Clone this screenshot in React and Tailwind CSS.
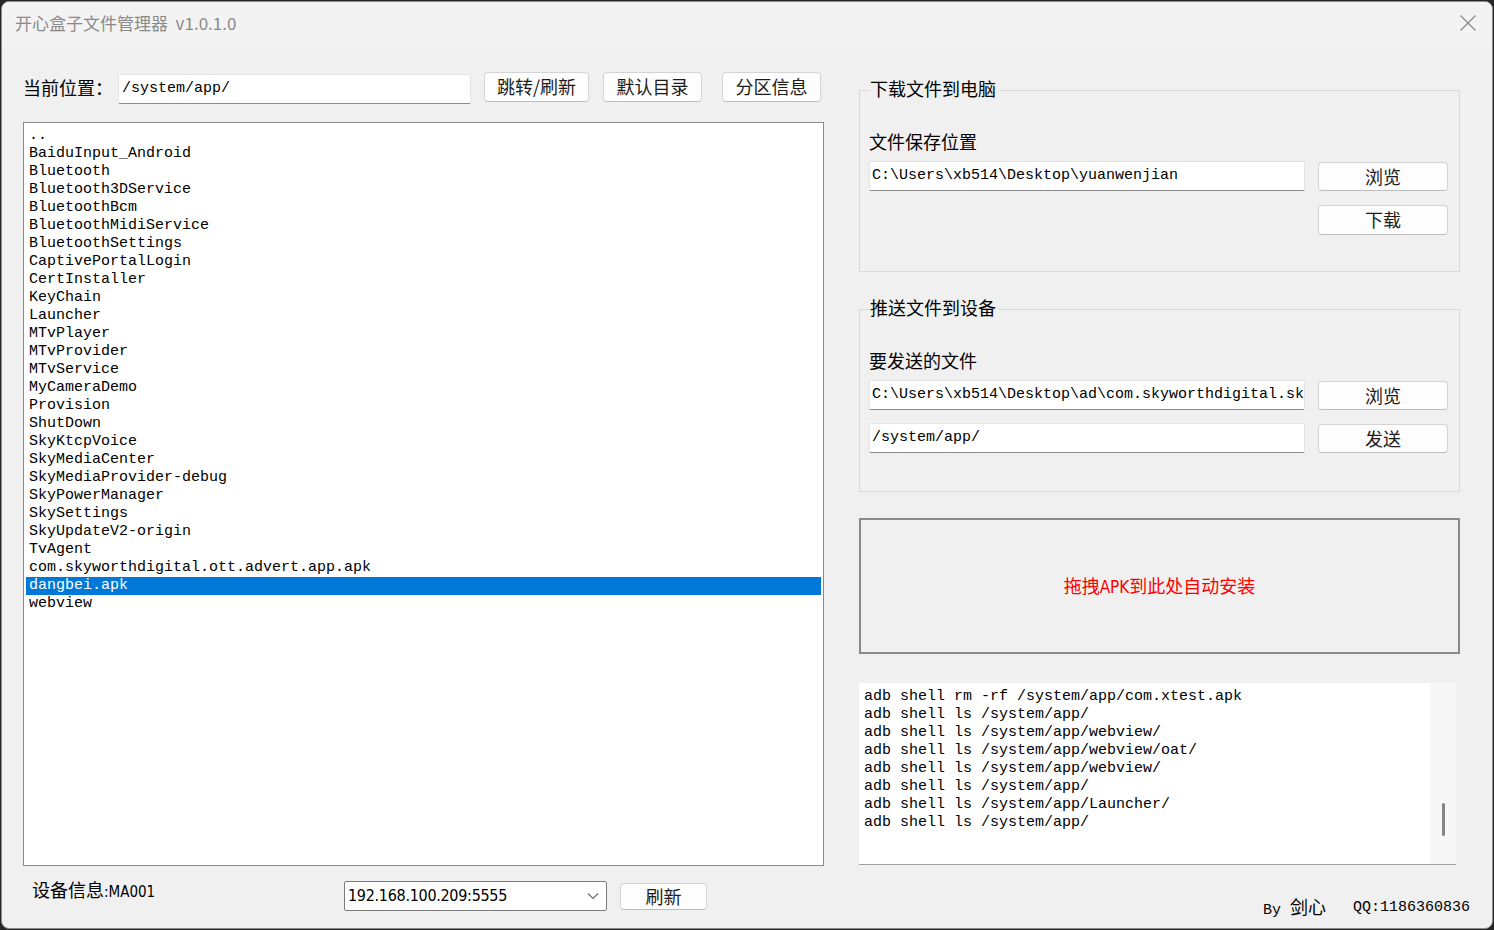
import React from "react";

const cjk = "font-['Noto_Sans_CJK_SC',sans-serif]";
const mono = "font-['Liberation_Mono','Noto_Sans_CJK_SC',monospace]";

function Btn({ children, className = "" }) {
  return (
    <div
      className={`flex items-center justify-center pb-[2px] bg-[#fdfdfd] border border-[#d4d4d4] border-b-[#bdbdbd] rounded-[4px] text-[18px] leading-none text-[#1b1b1b] font-['Noto_Sans_CJK_SC',sans-serif] ${className}`}
    >
      {children}
    </div>
  );
}

function Field({ children, className = "" }) {
  return (
    <div
      className={`h-[30px] bg-white border border-[#e4e4e4] border-b-[#8a8a8a] rounded-[2px] flex items-center pl-[2px] overflow-hidden whitespace-nowrap text-[15px] text-black font-['Liberation_Mono',monospace] ${className}`}
    >
      {children}
    </div>
  );
}

function Group({ title, children, className = "" }) {
  return (
    <div className={`relative border border-[#d9d9d9] ${className}`}>
      <div className="absolute left-[10px] top-[-15px] bg-[#f0f0f0] pr-[3px] text-[18px] leading-[24px] text-black font-['Noto_Sans_CJK_SC',sans-serif]">
        {title}
      </div>
      {children}
    </div>
  );
}

const files = [
  "..",
  "BaiduInput_Android",
  "Bluetooth",
  "Bluetooth3DService",
  "BluetoothBcm",
  "BluetoothMidiService",
  "BluetoothSettings",
  "CaptivePortalLogin",
  "CertInstaller",
  "KeyChain",
  "Launcher",
  "MTvPlayer",
  "MTvProvider",
  "MTvService",
  "MyCameraDemo",
  "Provision",
  "ShutDown",
  "SkyKtcpVoice",
  "SkyMediaCenter",
  "SkyMediaProvider-debug",
  "SkyPowerManager",
  "SkySettings",
  "SkyUpdateV2-origin",
  "TvAgent",
  "com.skyworthdigital.ott.advert.app.apk",
  "dangbei.apk",
  "webview",
];

const logs = [
  "adb shell rm -rf /system/app/com.xtest.apk",
  "adb shell ls /system/app/",
  "adb shell ls /system/app/webview/",
  "adb shell ls /system/app/webview/oat/",
  "adb shell ls /system/app/webview/",
  "adb shell ls /system/app/",
  "adb shell ls /system/app/Launcher/",
  "adb shell ls /system/app/",
];

export default function App() {
  return (
    <div className="w-[1494px] h-[930px] bg-[#262626] pt-[1px] pl-[1px] overflow-hidden">
      <div className="w-[1492px] h-[928px] rounded-[8px] border border-[#8c8c8c] overflow-hidden flex flex-col bg-[#f0f0f0]">
        {/* Title bar */}
        <div className="h-[46px] shrink-0 bg-[#f3f3f3] flex items-center justify-between pl-[13px] pr-[15px] pb-[5px]">
          <div className={`text-[17px] leading-none text-[#8a8a8a] ${cjk}`}>
            开心盒子文件管理器&nbsp; v1.0.1.0
          </div>
          <svg width="18" height="18" viewBox="0 0 18 18">
            <path d="M1.5 1.5 L16.5 16.5 M16.5 1.5 L1.5 16.5" stroke="#8a8a8a" strokeWidth="1.3" fill="none" />
          </svg>
        </div>

        {/* Body */}
        <div className="flex-1 flex pl-[21px] gap-[35px]">
          {/* Left column */}
          <div className="w-[801px] flex flex-col">
            <div className="mt-[24px] h-[32px] flex items-start">
              <div className={`w-[95px] mt-[3px] text-[18px] leading-[24px] text-black ${cjk}`}>当前位置：</div>
              <Field className="w-[353px] mt-[2px] pl-[3px]">/system/app/</Field>
              <Btn className="ml-[13px] w-[105px] h-[30px]">跳转/刷新</Btn>
              <Btn className="ml-[14px] w-[99px] h-[30px]">默认目录</Btn>
              <Btn className="ml-[20px] w-[99px] h-[30px]">分区信息</Btn>
            </div>

            <div className="mt-[18px] h-[744px] bg-white border border-[#8a8a8a] px-[2px] pt-[4px] overflow-hidden">
              {files.map((f) => (
                <div
                  key={f}
                  className={`h-[18px] leading-[18px] pl-[3px] whitespace-nowrap text-[15px] ${mono} ${
                    f === "dangbei.apk" ? "bg-[#0078d7] text-white" : "text-black"
                  }`}
                >
                  {f}
                </div>
              ))}
            </div>

            <div className="mt-[15px] flex items-start">
              <div className="w-[321px] pl-[9px] mt-[-4px] flex items-baseline whitespace-nowrap">
                <span className={`text-[18px] leading-[24px] text-black ${cjk}`}>设备信息</span>
                <span className="text-[15px] text-black font-['Liberation_Sans_Narrow','DejaVu_Sans_Condensed','Liberation_Mono',monospace]">:MA001</span>
              </div>
              <div className="w-[263px] h-[30px] bg-white border border-[#7a7a7a] rounded-[2px] flex items-center justify-between pl-[3px] pr-[7px]">
                <span className="text-[16px] text-black font-['Liberation_Sans_Narrow','DejaVu_Sans_Condensed','Liberation_Mono',monospace] tracking-[-0.3px]">
                  192.168.100.209:5555
                </span>
                <svg width="12" height="8" viewBox="0 0 12 8">
                  <path d="M1 1.5 L6 6.5 L11 1.5" stroke="#6e6e6e" strokeWidth="1.2" fill="none" />
                </svg>
              </div>
              <Btn className="ml-[13px] mt-[2px] w-[87px] h-[27px]">刷新</Btn>
            </div>
          </div>

          {/* Right column */}
          <div className="w-[611px] flex flex-col">
            <Group title="下载文件到电脑" className="mt-[42px] w-[601px] h-[182px]">
              <div className="pl-[9px] pt-[38px] flex flex-col">
                <div className={`text-[18px] leading-[24px] text-black ${cjk}`}>文件保存位置</div>
                <div className="mt-[8px] flex items-start">
                  <Field className="w-[436px]">{"C:\\Users\\xb514\\Desktop\\yuanwenjian"}</Field>
                  <Btn className="ml-[13px] mt-[1px] w-[130px] h-[29px]">浏览</Btn>
                </div>
                <Btn className="ml-[449px] mt-[14px] w-[130px] h-[30px]">下载</Btn>
              </div>
            </Group>

            <Group title="推送文件到设备" className="mt-[37px] w-[601px] h-[183px]">
              <div className="pl-[9px] pt-[38px] flex flex-col">
                <div className={`text-[18px] leading-[24px] text-black ${cjk}`}>要发送的文件</div>
                <div className="mt-[8px] flex items-start">
                  <Field className="w-[436px]">
                    {"C:\\Users\\xb514\\Desktop\\ad\\com.skyworthdigital.sk"}
                  </Field>
                  <Btn className="ml-[13px] mt-[1px] w-[130px] h-[29px]">浏览</Btn>
                </div>
                <div className="mt-[13px] flex items-start">
                  <Field className="w-[436px]">/system/app/</Field>
                  <Btn className="ml-[13px] mt-[1px] w-[130px] h-[29px]">发送</Btn>
                </div>
              </div>
            </Group>

            <div className="mt-[26px] w-[601px] h-[136px] border-2 border-[#8a8a8a] flex items-center justify-center">
              <span className={`text-[18px] leading-none text-[#ff0000] ${cjk}`}>
                拖拽<span className="font-['Liberation_Sans_Narrow','DejaVu_Sans_Condensed','Liberation_Sans',sans-serif] text-[17px]">APK</span>到此处自动安装
              </span>
            </div>

            <div className="mt-[29px] w-[597px] h-[182px] bg-white border-b border-[#a0a0a0] flex">
              <div className="flex-1 pt-[5px] pl-[5px] overflow-hidden">
                {logs.map((l, i) => (
                  <div key={i} className={`h-[18px] leading-[18px] whitespace-nowrap text-[15px] text-black ${mono}`}>
                    {l}
                  </div>
                ))}
              </div>
              <div className="w-[26px] bg-[#f7f7f7] flex justify-center pt-[120px]">
                <div className="w-[3px] h-[33px] rounded-full bg-[#858585]" />
              </div>
            </div>

            <div className="mt-[29px] flex justify-end items-center gap-[27px]">
              <span className="whitespace-nowrap flex items-baseline">
                <span className={`text-[15px] text-black ${mono}`}>By&nbsp;</span>
                <span className={`text-[18px] leading-[24px] text-black ${cjk}`}>剑心</span>
              </span>
              <span className={`text-[15px] text-black ${mono}`}>QQ:1186360836</span>
            </div>
          </div>
        </div>
      </div>
    </div>
  );
}
